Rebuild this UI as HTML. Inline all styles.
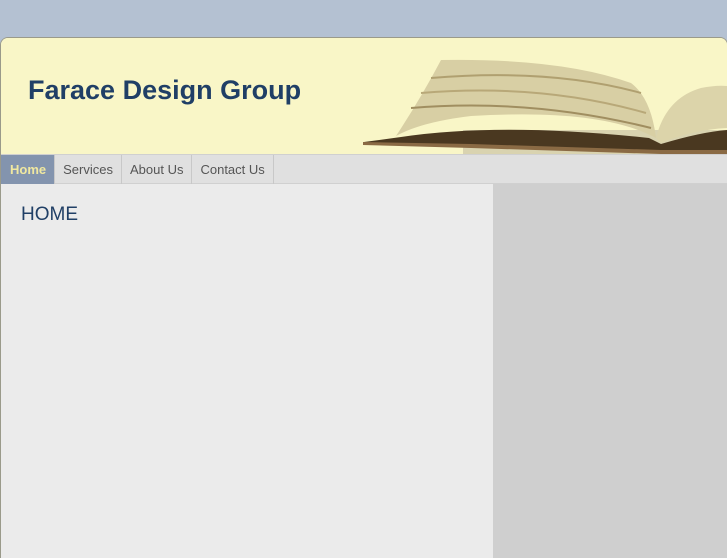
<!DOCTYPE html>
<html><head><style>
body{margin:0;width:727px;height:545px;background:#b4c1d2;font-family:"Liberation Sans",sans-serif;overflow:hidden;position:relative}
#wrap{position:absolute;left:0;top:37px;width:726px;height:520px;border:1px solid #9a9a8a;border-bottom:none;border-radius:8px 8px 0 0;overflow:hidden;background:#ebebeb}
#hdr{position:absolute;left:0;top:0;width:726px;height:116px;background:#f9f6c7}
#hdr h1{position:absolute;left:27px;top:37px;margin:0;font-size:27px;font-weight:bold;color:#203f66}
#nav{position:absolute;left:0;top:116px;width:726px;height:30px;background:#e0e0e0;border-top:1px solid #d0d0d0;border-bottom:1px solid #d0d0d0;box-sizing:border-box}
#nav span{float:left;height:29px;line-height:29px;padding:0 8px;font-size:13px;color:#555;border-right:1px solid #c8c8c8}
#nav span.on{background:#8394ae;color:#f0e8a0;font-weight:bold;padding:0 8px 0 9px}
#side{position:absolute;left:492px;top:146px;width:234px;height:400px;background:#cfcfcf}
h2{position:absolute;left:20px;top:166px;margin:0;font-weight:normal;font-size:19px;color:#203f66}
</style></head><body>
<div id="wrap">
<div id="hdr"><h1>Farace Design Group</h1>
<svg width="726" height="116" style="position:absolute;left:0;top:0">
<rect x="462" y="92" width="264" height="24" fill="#d9d3b0"/>
<path d="M395 98 Q420 60 440 22 Q560 20 630 45 Q650 60 655 100 Q600 70 470 78 Q420 84 395 98Z" fill="#d8cfa4"/>
<path d="M430 40 Q550 30 640 55" stroke="#b0a070" stroke-width="2" fill="none"/>
<path d="M420 55 Q540 45 645 75" stroke="#b8a878" stroke-width="2" fill="none"/>
<path d="M410 70 Q530 60 650 90" stroke="#a08e60" stroke-width="2" fill="none"/>
<path d="M655 100 Q665 60 700 50 Q715 47 726 48 L726 90 Q690 92 660 105Z" fill="#dcd4aa"/>
<path d="M363 104 L400 99 Q500 84 648 100 L660 106 Q700 94 726 92 L726 113 Q690 118 660 115 L470 109 L363 106Z" fill="#4a3820"/>
<path d="M362 104 L470 106 L660 112 L726 112 L726 116 L660 116 L470 110 L362 107Z" fill="#8a6a44"/>
</svg></div>
<div id="nav"><span class="on">Home</span><span>Services</span><span>About Us</span><span>Contact Us</span></div>
<div id="side"></div>
<h2>HOME</h2>
</div>
</body></html>
